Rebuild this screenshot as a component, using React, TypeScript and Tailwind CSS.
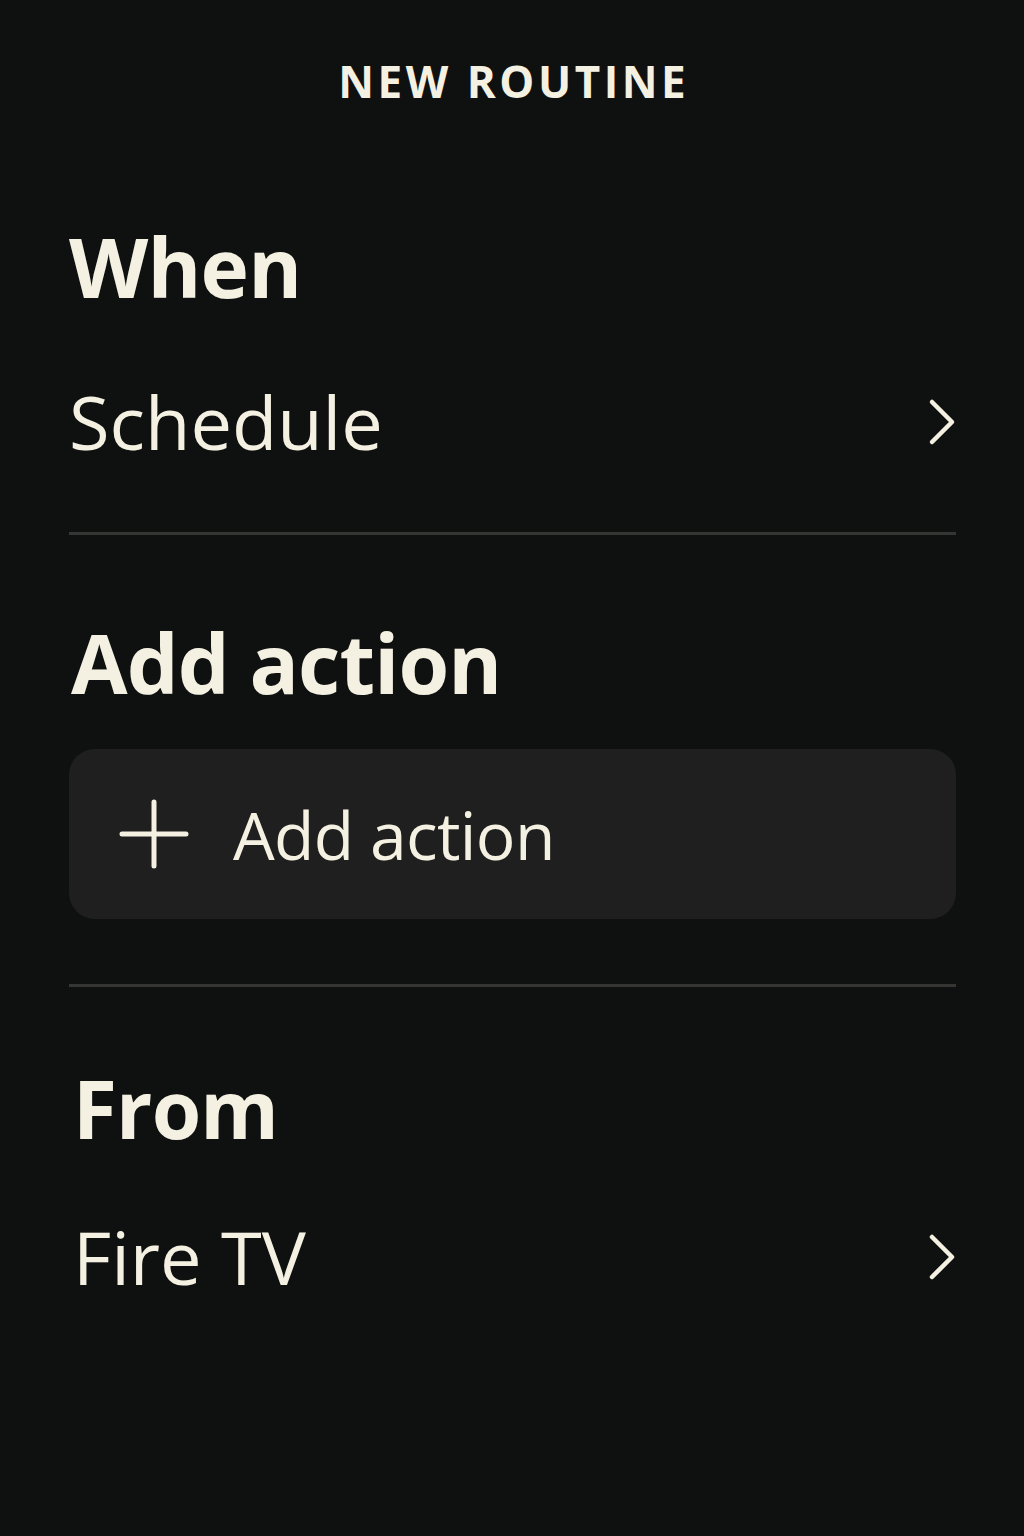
import React from 'react';

function Chevron() {
  return <svg width="30" height="48" viewBox="0 0 30 48" fill="none" className="shrink-0 -mr-[2px]">
      <path d="M4 4 L24 24 L4 44" stroke="#f4f0e2" strokeWidth="4.5" strokeLinecap="round" strokeLinejoin="round" />
    </svg>;
}

function PlusIcon() {
  return <svg width="70" height="70" viewBox="0 0 70 70" fill="none" className="shrink-0">
      <path d="M35 3 V67 M3 35 H67" stroke="#f4f0e2" strokeWidth="5" strokeLinecap="round" />
    </svg>;
}

function Divider({ className }: { className: string }) {
  return <div className={`h-[3px] w-full bg-[#353533] ${className}`} />;
}

export default function App() {
  return <div className="min-h-screen w-full bg-[#0f1110] text-[#f4f0e2] font-['Open_Sans','Noto_Sans',sans-serif]">
      <div className="h-[162px] flex items-center justify-center">
        <h2 className="text-[44px] leading-none font-bold tracking-[0.08em] pl-[0.08em]">NEW ROUTINE</h2>
      </div>
      <div className="pl-[69px] pr-[68px]">
        <div className="h-[208px] flex items-center">
          <h1 className="text-[82px] leading-none font-bold tracking-[-0.01em]">When</h1>
        </div>
        <button className="h-[104px] w-full flex items-center justify-between">
          <span className="text-[74px] leading-none font-normal">Schedule</span>
          <Chevron />
        </button>
        <Divider className="mt-[58px]" />
        <div className="mt-[77px] h-[100px] flex items-center">
          <h1 className="text-[82px] leading-none font-bold tracking-[-0.01em] pl-[2px]">Add action</h1>
        </div>
        <button className="mt-[37px] h-[170px] w-full rounded-[26px] bg-[#1e1f1e] flex items-center gap-[44px] pl-[50px]">
          <PlusIcon />
          <span className="text-[66px] leading-none font-normal tracking-[-0.01em]">Add action</span>
        </button>
        <Divider className="mt-[65px]" />
        <div className="mt-[71px] h-[100px] flex items-center">
          <h1 className="text-[80px] leading-none font-bold tracking-[-0.01em] pl-[4px]">From</h1>
        </div>
        <button className="mt-[49px] h-[100px] w-full flex items-center justify-between">
          <span className="text-[74px] leading-none font-normal pl-[4px]">Fire TV</span>
          <Chevron />
        </button>
      </div>
    </div>;
}
